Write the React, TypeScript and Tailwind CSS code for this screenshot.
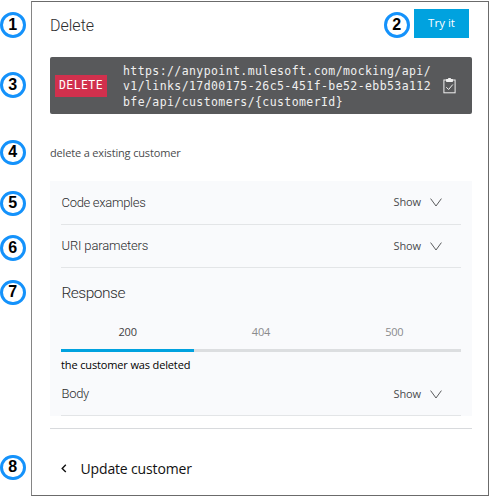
import type { ReactNode } from "react";

function Badge({ n, className = "" }: { n: number; className?: string }) {
  return (
    <div
      className={`flex size-[25.5px] shrink-0 items-center justify-center rounded-full border-[3px] border-[#1492fb] bg-white font-['Liberation_Sans',Arial,sans-serif] text-[16px] leading-none font-bold text-black ${className}`}
    >
      {n}
    </div>
  );
}

function ShowToggle() {
  return (
    <div className="mr-[19px] flex items-center text-[11px] tracking-[-0.1px] text-[#4a4b4d]">
      <span className="w-[36.5px]">Show</span>
      <svg width="12" height="9" viewBox="0 0 12 9" fill="none" stroke="#5a5b5d" strokeWidth="1">
        <path d="M0.6 0.6L6 8L11.4 0.6" />
      </svg>
    </div>
  );
}

function Row({ title, className }: { title: ReactNode; className: string }) {
  return (
    <div className={`flex items-center justify-between border-b border-[#e3e5e7] ${className}`}>
      <span className="pl-[0.5px] font-['Roboto',sans-serif] text-[13px] font-light tracking-[-0.3px] text-[#2c2d2e]">
        {title}
      </span>
      <ShowToggle />
    </div>
  );
}

export default function App() {
  return (
    <div className="flex h-[496px] w-[489px] overflow-hidden bg-white font-['Open_Sans',sans-serif]">
      <div className="flex w-[31px] shrink-0 flex-col pt-[12px]">
        <Badge n={1} />
        <Badge n={3} className="mt-[34.5px]" />
        <Badge n={4} className="mt-[42px]" />
        <Badge n={5} className="mt-[25.5px]" />
        <Badge n={6} className="mt-[19px]" />
        <Badge n={7} className="mt-[19px]" />
        <Badge n={8} className="mt-[149.5px]" />
      </div>

      <div className="mt-px flex h-[495px] w-[458px] flex-col border border-[#6b6b6b] border-l-[#858585] pr-[16px] pl-[18px]">
        <div className="flex h-[55px] items-start">
          <h1 className="mt-[12px] flex-1 font-['Roboto',sans-serif] text-[16px] leading-[24px] font-light text-[#2c2d2e]">
            Delete
          </h1>
          <Badge n={2} className="mt-[10px] mr-[4.5px]" />
          <button className="mt-[7px] mr-[3px] h-[29px] w-[55px] bg-[#00a2df] pb-px text-[11.5px] text-white">Try it</button>
        </div>

        <div className="flex h-[57px] w-[422px] shrink-0 items-center rounded-[2px] bg-[#58595b] pl-[5px] text-white">
          <div className="flex h-[22px] w-[52px] items-center justify-center bg-[#d1304d] pt-px font-['DejaVu_Sans_Mono',monospace] text-[11.5px] tracking-[0.42px]">
            DELETE
          </div>
          <div className="ml-[16px] w-[312px] pt-[3px] font-['DejaVu_Sans_Mono',monospace] text-[11.5px] leading-[15.2px] tracking-[0.41px] whitespace-nowrap text-[#f0f0f0]">
            <div>https://anypoint.mulesoft.com/mocking/api/</div>
            <div>v1/links/17d00175-26c5-451f-be52-ebb53a112</div>
            <div>bfe/api/customers/{"{customerId}"}</div>
          </div>
          <svg className="ml-[8px]" width="13" height="16" viewBox="0 0 13 16" fill="none" stroke="#f0f0f0">
            <rect x="0.9" y="2" width="11.2" height="12.8" />
            <path d="M3.5 1.5H5L5.5 0.5H7.5L8 1.5H9.5V3.5H3.5Z" fill="#f0f0f0" />
            <path d="M3.3 9.2L5.6 11.5L9.8 6.5" />
          </svg>
        </div>

        <p className="mt-[31px] h-[16px] text-[11px] leading-[16px] tracking-[-0.16px] whitespace-nowrap text-[#4a4b4d]">
          delete a existing customer
        </p>

        <div className="mt-[20px] h-[235px] w-[422px] shrink-0 bg-[#f9fafc] px-[11px]">
          <Row title="Code examples" className="h-[44px]" />
          <Row title={<span className="tracking-[-0.15px]">URI parameters</span>} className="h-[43px]" />
          <h2 className="mt-[13px] pl-[0.5px] font-['Roboto',sans-serif] text-[15.5px] leading-[24px] font-light tracking-[-0.5px] text-[#2c2d2e]">
            Response
          </h2>
          <div className="mt-[15px] grid h-[32px] grid-cols-3 text-center text-[11px] leading-[24px] tracking-[-0.2px] text-[#8a8b8d]">
            <div className="border-b-[3px] border-[#00a2df] text-[#3f4042]">200</div>
            <div className="border-b-[3px] border-[#dcdee0]">404</div>
            <div className="border-b-[3px] border-[#dcdee0]">500</div>
          </div>
          <p className="mt-[4px] h-[17px] text-[11px] leading-[18px] tracking-[-0.14px] text-black">the customer was deleted</p>
          <Row title="Body" className="h-[43px]" />
        </div>

        <div className="mt-[12px] flex h-[67px] items-center border-t border-[#d8dadd] pt-[12px] pl-[11px]">
          <svg width="6" height="9" viewBox="0 0 6 9" fill="none" stroke="#111" strokeWidth="1.4">
            <path d="M4.8 0.8L1.2 4.4L4.8 8" />
          </svg>
          <span className="ml-[13.5px] text-[14px] tracking-[-0.15px] text-[#111]">Update customer</span>
        </div>
      </div>
    </div>
  );
}
